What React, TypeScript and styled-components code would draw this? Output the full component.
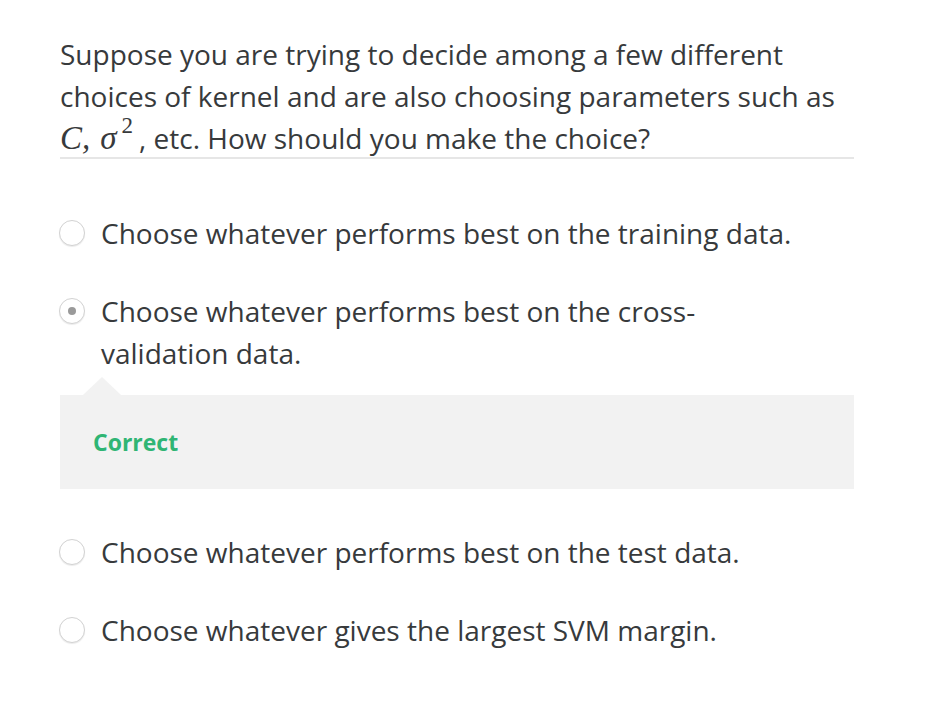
import React from 'react';
import styled, { createGlobalStyle } from 'styled-components';

const GlobalStyle = createGlobalStyle`
  html, body {
    margin: 0;
    padding: 0;
    background: #ffffff;
  }
  body {
    font-family: 'Open Sans', 'Noto Sans', sans-serif;
    color: #373a3c;
  }
`;

type Option = {
  id: string;
  label: string;
  selected?: boolean;
  feedback?: string;
};

const options: Option[] = [
  { id: 'a', label: 'Choose whatever performs best on the training data.' },
  {
    id: 'b',
    label: 'Choose whatever performs best on the cross-validation data.',
    selected: true,
    feedback: 'Correct',
  },
  { id: 'c', label: 'Choose whatever performs best on the test data.' },
  { id: 'd', label: 'Choose whatever gives the largest SVM margin.' },
];

const App: React.FC = () => {
  return (
    <>
      <GlobalStyle />
      <Page>
        <Question>
          Suppose you are trying to decide among a few different choices of kernel and are also
          choosing parameters such as{' '}
          <Math>
            <MathVar>C</MathVar>
            <MathPunct>,</MathPunct>
            <MathVar>σ</MathVar>
            <MathSup>2</MathSup>
          </Math>
          , etc. How should you make the choice?
        </Question>
        <OptionList>
          {options.map((opt) => (
            <OptionItem key={opt.id}>
              <Row>
                <Radio $selected={!!opt.selected} />
                <Label>{opt.label}</Label>
              </Row>
              {opt.feedback && (
                <Feedback>
                  <FeedbackText>{opt.feedback}</FeedbackText>
                </Feedback>
              )}
            </OptionItem>
          ))}
        </OptionList>
      </Page>
    </>
  );
};

export default App;

const Page = styled.div`
  width: 794px;
  padding: 33px 0 40px 60px;
`;

const Question = styled.div`
  font-size: 28px;
  line-height: 42px;
  height: 124px;
  border-bottom: 2px solid #e6e6e6;
`;

const Math = styled.span`
  font-family: 'Liberation Serif', 'DejaVu Serif', serif;
  font-size: 33px;
  line-height: 1;
  white-space: nowrap;
`;

const MathVar = styled.span`
  font-style: italic;
`;

const MathPunct = styled.span`
  font-style: italic;
  margin-right: 10px;
`;

const MathSup = styled.sup`
  font-size: 23px;
  font-style: normal;
  vertical-align: 0;
  position: relative;
  top: -16px;
  margin-left: 5px;
  margin-right: 6px;
  line-height: 0;
`;

const OptionList = styled.div`
  display: flex;
  flex-direction: column;
  gap: 36px;
  margin-top: 53px;
`;

const OptionItem = styled.div`
  display: flex;
  flex-direction: column;
`;

const Row = styled.div`
  display: flex;
  align-items: flex-start;
  gap: 16px;
`;

const Radio = styled.span<{ $selected: boolean }>`
  flex: 0 0 auto;
  width: 24px;
  height: 24px;
  margin-top: 8px;
  margin-left: -1px;
  border-radius: 50%;
  border: 1px solid #d2d2d2;
  background: #ffffff;
  box-shadow: 0 1px 1px rgba(0, 0, 0, 0.08);
  display: flex;
  align-items: center;
  justify-content: center;

  &::after {
    content: '';
    display: ${({ $selected }) => ($selected ? 'block' : 'none')};
    width: 8px;
    height: 8px;
    border-radius: 50%;
    background: #9a9a9a;
  }
`;

const Label = styled.div`
  font-size: 28px;
  line-height: 42px;
  max-width: 720px;
`;

const Feedback = styled.div`
  position: relative;
  margin-top: 21px;
  margin-bottom: 6px;
  background: #f2f2f2;
  height: 94px;
  display: flex;
  align-items: center;
  padding-left: 33px;

  &::before {
    content: '';
    position: absolute;
    left: 23px;
    top: -18px;
    border-left: 19px solid transparent;
    border-right: 19px solid transparent;
    border-bottom: 18px solid #f2f2f2;
  }
`;

const FeedbackText = styled.div`
  font-size: 23px;
  font-weight: 700;
  color: #2fb574;
`;
